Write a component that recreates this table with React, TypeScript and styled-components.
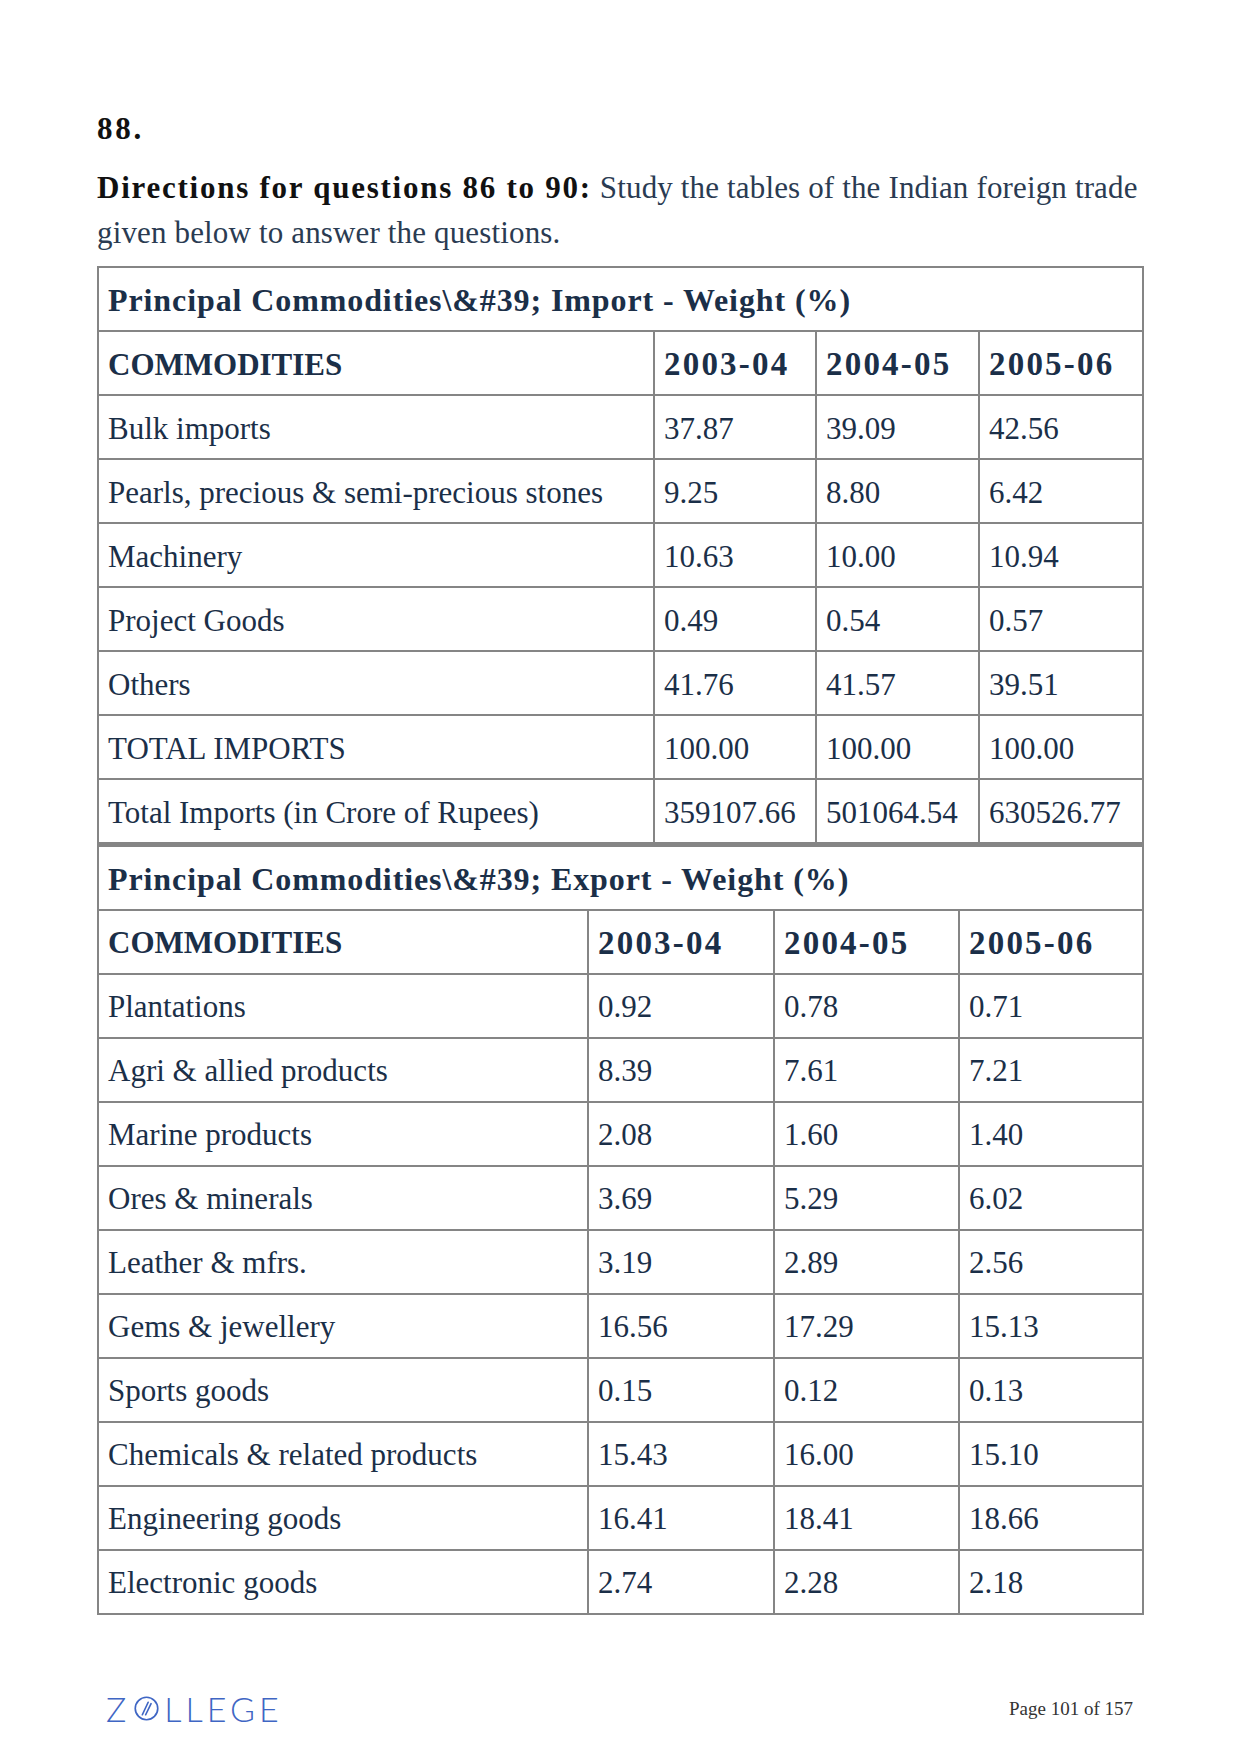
import React from "react"
import styled, { createGlobalStyle } from "styled-components"

const Global = createGlobalStyle`
  html, body {
    margin: 0;
    padding: 0;
    background: #ffffff;
  }
  body {
    font-family: "Liberation Serif", "Times New Roman", serif;
  }
`

const Page = styled.div`
  width: 1239px;
  min-height: 1754px;
  box-sizing: border-box;
  padding: 109px 94px 0 97px;
  display: flex;
  flex-direction: column;
`

const Number = styled.div`
  font-size: 31px;
  line-height: 40px;
  font-weight: 700;
  letter-spacing: 2.8px;
  color: #111111;
`

const Directions = styled.p`
  margin: 16px 0 11px;
  font-size: 31px;
  line-height: 45px;
  letter-spacing: 0.15px;
  color: #2a3b52;
  white-space: nowrap;

  b {
    color: #111111;
    letter-spacing: 1.75px;
  }
`

const Table = styled.table<{ $top?: boolean }>`
  width: 1045px;
  border-collapse: collapse;
  table-layout: fixed;
  border: 2px solid #858585;
  ${(p) => (p.$top ? "border-top-width: 3px;" : "")}
  color: #1b2f48;
  font-size: 31px;

  td,
  th {
    border: 2px solid #858585;
    height: 64px;
    padding: 3px 9px 0;
    box-sizing: border-box;
    text-align: left;
    vertical-align: middle;
    white-space: nowrap;
  }
`

const Caption = styled.th`
  font-weight: 700;
  font-size: 32px;
  letter-spacing: 0.9px;
`

const HeadCell = styled.th<{ $year?: boolean }>`
  font-weight: 700;
  font-size: ${(p) => (p.$year ? "33px" : "31px")};
  letter-spacing: ${(p) => (p.$year ? "2.2px" : "0")};
`

const Cell = styled.td`
  font-weight: 400;
`

const Footer = styled.div`
  margin-top: 77px;
  display: flex;
  align-items: center;
  justify-content: space-between;
  padding: 0 12px 0 9px;
`

const Logo = styled.div`
  display: flex;
  align-items: center;
  gap: 4px;
  color: #3f66c4;
  font-family: "Lato", "Open Sans", "Liberation Sans", sans-serif;
  font-weight: 300;
  font-size: 34px;
  letter-spacing: 4px;
  line-height: 1;

  svg {
    width: 25px;
    height: 25px;
    margin-right: 1px;
  }
`

const PageNo = styled.div`
  font-size: 19px;
  color: #333333;
`

type Row = [string, string, string, string]

const imports: Row[] = [
  ["Bulk imports", "37.87", "39.09", "42.56"],
  ["Pearls, precious & semi-precious stones", "9.25", "8.80", "6.42"],
  ["Machinery", "10.63", "10.00", "10.94"],
  ["Project Goods", "0.49", "0.54", "0.57"],
  ["Others", "41.76", "41.57", "39.51"],
  ["TOTAL IMPORTS", "100.00", "100.00", "100.00"],
  ["Total Imports (in Crore of Rupees)", "359107.66", "501064.54", "630526.77"],
]

const exports: Row[] = [
  ["Plantations", "0.92", "0.78", "0.71"],
  ["Agri & allied products", "8.39", "7.61", "7.21"],
  ["Marine products", "2.08", "1.60", "1.40"],
  ["Ores & minerals", "3.69", "5.29", "6.02"],
  ["Leather & mfrs.", "3.19", "2.89", "2.56"],
  ["Gems & jewellery", "16.56", "17.29", "15.13"],
  ["Sports goods", "0.15", "0.12", "0.13"],
  ["Chemicals & related products", "15.43", "16.00", "15.10"],
  ["Engineering goods", "16.41", "18.41", "18.66"],
  ["Electronic goods", "2.74", "2.28", "2.18"],
]

const TradeTable = ({
  title,
  widths,
  rows,
  top,
}: {
  title: string
  widths: number[]
  rows: Row[]
  top?: boolean
}) => (
  <Table $top={top}>
    <colgroup>
      {widths.map((w, i) => (
        <col key={i} style={{ width: w }} />
      ))}
    </colgroup>
    <tbody>
      <tr>
        <Caption colSpan={4}>{title}</Caption>
      </tr>
      <tr>
        <HeadCell>COMMODITIES</HeadCell>
        <HeadCell $year>2003-04</HeadCell>
        <HeadCell $year>2004-05</HeadCell>
        <HeadCell $year>2005-06</HeadCell>
      </tr>
      {rows.map((r) => (
        <tr key={r[0]}>
          {r.map((c, i) => (
            <Cell key={i}>{c}</Cell>
          ))}
        </tr>
      ))}
    </tbody>
  </Table>
)

const ZMark = () => (
  <svg viewBox="0 0 24 24" fill="none" stroke="currentColor" strokeWidth="1.6">
    <circle cx="12" cy="12" r="10.8" />
    <path d="M8 18 L13.6 6 M11.2 18 L16.4 7.4" strokeLinecap="round" />
  </svg>
)

export default function App() {
  return (
    <Page>
      <Global />
      <Number>88.</Number>
      <Directions>
        <b>Directions for questions 86 to 90:</b> Study the tables of the Indian foreign trade
        <br />
        given below to answer the questions.
      </Directions>
      <TradeTable
        title={"Principal Commodities\\&#39; Import - Weight (%)"}
        widths={[556, 162, 163, 164]}
        rows={imports}
      />
      <TradeTable
        title={"Principal Commodities\\&#39; Export - Weight (%)"}
        widths={[490, 186, 185, 184]}
        rows={exports}
        top
      />
      <Footer>
        <Logo>
          Z<ZMark />
          LLEGE
        </Logo>
        <PageNo>Page 101 of 157</PageNo>
      </Footer>
    </Page>
  )
}
